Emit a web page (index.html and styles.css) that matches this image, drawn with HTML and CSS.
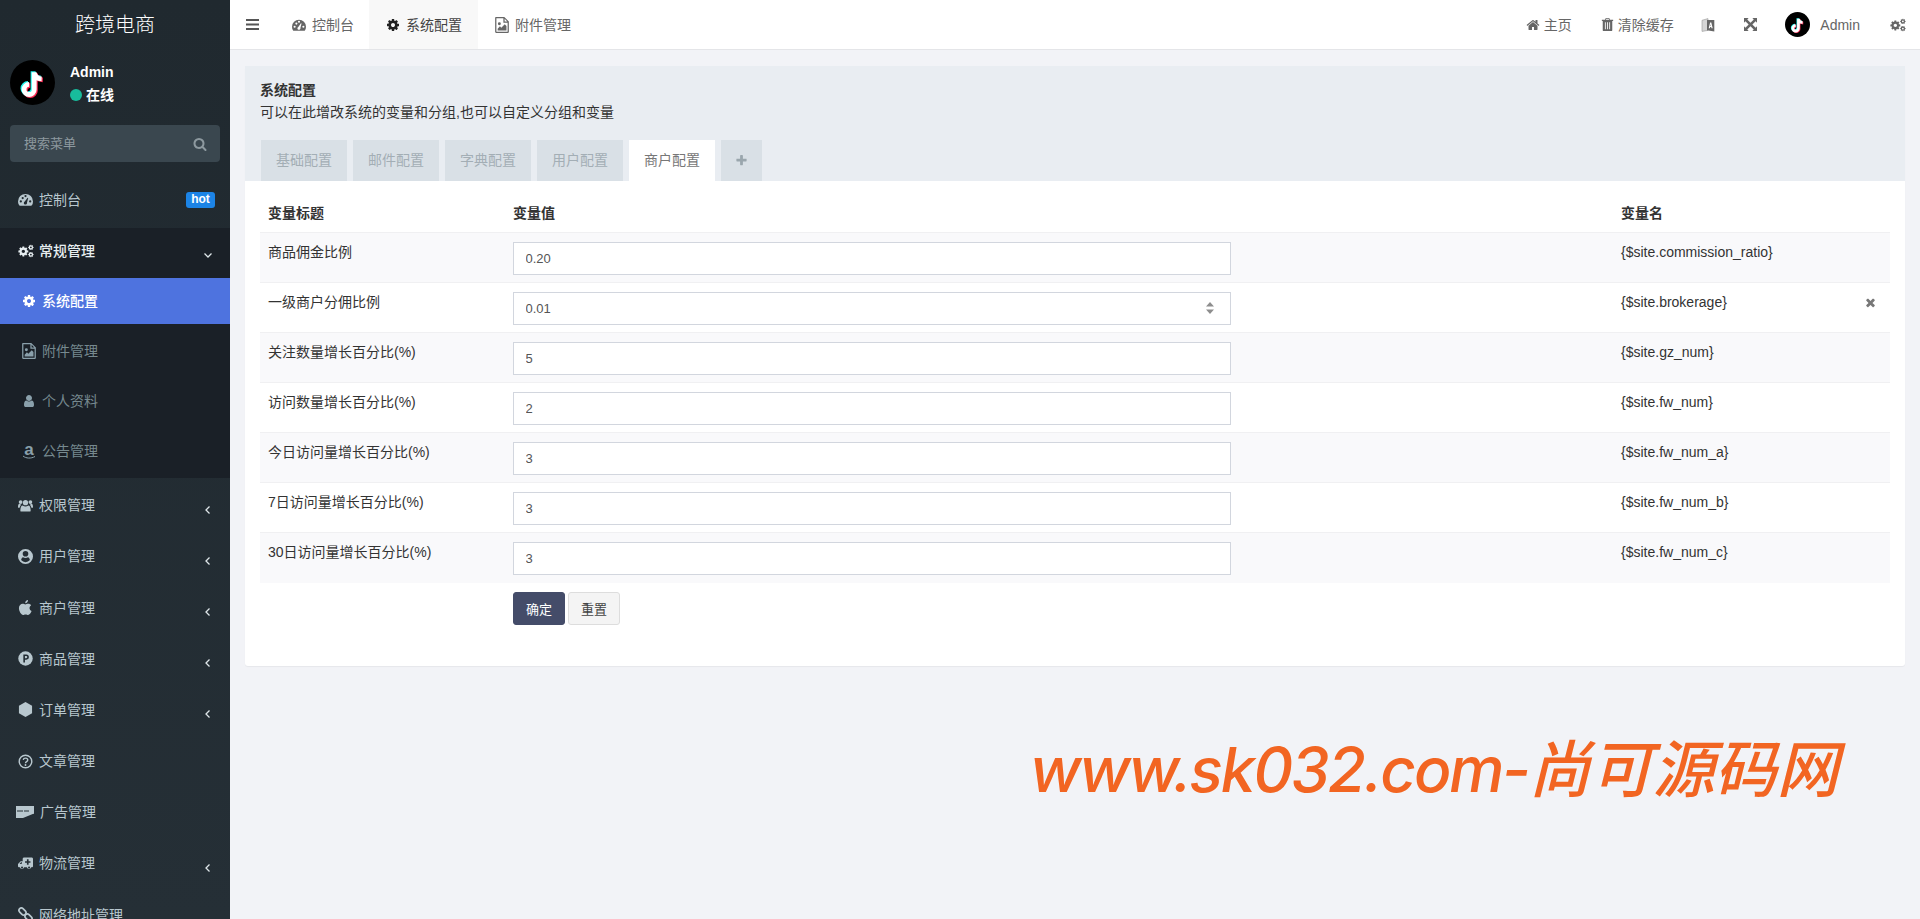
FILE: index.html
```html
<!DOCTYPE html>
<html lang="zh-CN">
<head>
<meta charset="utf-8">
<title>系统配置</title>
<link rel="stylesheet" href="styles.css">
</head>
<body>
<svg class="defs" width="0" height="0" aria-hidden="true">
  <defs>
    <symbol id="i-cog" viewBox="0 0 1792 1792"><path d="M1152 896q0-106-75-181t-181-75-181 75-75 181 75 181 181 75 181-75 75-181zm512-109v222q0 12-8 23t-20 13l-185 28q-19 54-39 91 35 50 107 138 10 12 10 25t-9 23q-27 37-99 108t-94 71q-12 0-26-9l-138-108q-44 23-91 38-16 136-29 186-7 28-36 28h-222q-14 0-24.500-8.500t-11.500-21.500l-28-184q-49-16-90-37l-141 107q-10 9-25 9-14 0-25-11-126-114-165-168-7-10-7-23 0-12 8-23 15-21 51-66.500t54-70.500q-27-50-41-99l-183-27q-13-2-21-12.500t-8-23.500v-222q0-12 8-23t19-13l186-28q14-46 39-92-40-57-107-138-10-12-10-24 0-10 9-23 26-36 98.500-107.500t94.500-71.500q13 0 26 10l138 107q44-23 91-38 16-136 29-186 7-28 36-28h222q14 0 24.500 8.500t11.500 21.500l28 184q49 16 90 37l142-107q9-9 24-9 13 0 25 10 129 119 165 170 7 8 7 22 0 12-8 23-15 21-51 66.500t-54 70.500q26 50 41 98l183 28q13 2 21 12.500t8 23.500z"/></symbol>
    <symbol id="i-cogs" viewBox="0 1 18 15"><use href="#i-cog" x="-.5" y="2.500" width="13" height="13"/><use href="#i-cog" x="11" y="1" width="7" height="7"/><use href="#i-cog" x="11" y="9" width="7" height="7"/></symbol>
    <symbol id="i-gauge" viewBox="0 0 16 14"><path fill-rule="evenodd" d="M8 1a8 8 0 0 0-8 8c0 1.600.4 3 1.200 4.200.2.300.5.500.9.500h11.800c.4 0 .7-.2.900-.5A8 8 0 0 0 16 9a8 8 0 0 0-8-8zM3 10.200a1.200 1.200 0 1 1 0-2.400 1.200 1.200 0 0 1 0 2.400zm2-3.600a1.200 1.200 0 1 1 0-2.400 1.200 1.200 0 0 1 0 2.400zM8 4.500a1.200 1.200 0 1 1 0-2.400 1.200 1.200 0 0 1 0 2.400zM9.200 11.800a1.700 1.700 0 0 1-3-1.200c0-.6.500-1.100 1-1.400l3-4.200.7.300-1.300 5c.2.500.1 1.100-.4 1.500zM13 10.200a1.200 1.200 0 1 1 0-2.400 1.200 1.200 0 0 1 0 2.400z"/></symbol>
    <symbol id="i-file" viewBox="0 0 12 14"><path fill-rule="evenodd" d="M.8 0h7.200l4 4v9.200c0 .4-.4.800-.8.800H.8c-.4 0-.8-.4-.8-.8V.8C0 .4.400 0 .8 0zm.3 1.100v11.800h9.800V5H7.200V1.100zM8.300 1.500V3.900h2.300zM2.200 11.800v-1.600l2-2 1.200 1.200 3-3 1.500 1.500v3.900zM3.700 7.200a1.300 1.300 0 1 1 0-2.600 1.300 1.300 0 0 1 0 2.600z"/></symbol>
    <symbol id="i-user" viewBox="0 0 1792 1792"><path d="M1536 1399q0 109-62.500 187t-150.500 78h-854q-88 0-150.500-78t-62.500-187q0-85 8.500-160.500t31.500-152 58.500-131 94-89 134.500-34.500q131 128 313 128t313-128q76 0 134.500 34.500t94 89 58.500 131 31.500 152 8.500 160.500zm-256-887q0 159-112.500 271.500t-271.500 112.500-271.500-112.500-112.500-271.500 112.500-271.500 271.500-112.500 271.500 112.500 112.500 271.500z"/></symbol>
    <symbol id="i-users" viewBox="0 0 16 13"><circle cx="8" cy="3.500" r="2.800"/><circle cx="2.800" cy="2.800" r="2"/><circle cx="13.200" cy="2.800" r="2"/><path d="M3.500 13c-.6 0-1-.4-1-1 0-3 .8-5.500 2.500-5.500 1 .7 2 1 3 1s2-.3 3-1c1.700 0 2.500 2.500 2.500 5.500 0 .6-.4 1-1 1z"/><path d="M0 8c0-1.800.5-3.300 1.500-3.300.6.400 1.200.6 1.900.6-.3.900-1.300 1.500-1.700 3.700H.6C.2 9 0 8.500 0 8zM16 8c0-1.800-.5-3.300-1.500-3.300-.6.400-1.200.6-1.900.6.300.9 1.300 1.500 1.700 3.700h1.100c.4 0 .6-.5.600-1z"/></symbol>
    <symbol id="i-ucircle" viewBox="0 0 16 16"><path fill-rule="evenodd" d="M8 0a8 8 0 1 1 0 16A8 8 0 0 1 8 0zm0 2a3 3 0 1 0 0 6 3 3 0 0 0 0-6zm-4.700 9.700A6 6 0 0 0 8 14a6 6 0 0 0 4.700-2.300C12.400 10 11.500 9 10.600 8.800 9.900 9.300 9 9.600 8 9.600s-1.900-.3-2.600-.8C4.500 9 3.600 10 3.300 11.700z"/></symbol>
    <symbol id="i-apple" viewBox="0 0 14 16"><path d="M9.700 0c.1 1.800-1.300 3.400-3 3.500C6.500 1.700 8 .2 9.700 0zM4 4c1.100 0 2 .7 2.900.7.800 0 1.800-.8 3.100-.7 1.200 0 2.300.6 3 1.600-2.500 1.600-2.100 5 .5 6.200-.8 2-2.300 4.200-3.700 4.200-.9 0-1.400-.6-2.700-.6s-1.800.6-2.700.6C2.400 16 0 11.900 0 8.600 0 5.700 2 4 4 4z"/></symbol>
    <symbol id="i-ph" viewBox="0 0 16 16"><circle cx="8" cy="8" r="7.700"/><path fill="#222c33" fill-rule="evenodd" d="M5.700 3.800h3.200a2.700 2.700 0 0 1 0 5.400H7.400v3H5.700zm1.700 1.600v2.200h1.400a1.100 1.100 0 0 0 0-2.200z"/></symbol>
    <symbol id="i-cube" viewBox="0 0 14 16"><path d="M7 0l7 4v8l-7 4-7-4V4z"/></symbol>
    <symbol id="i-help" viewBox="0 0 16 16"><circle class="ring" cx="8" cy="8" r="6.700"/><path class="hook" d="M5.600 6.300C5.800 5 6.800 4.400 8 4.400c1.400 0 2.400.8 2.400 2 0 1.800-2.400 1.700-2.400 3.400"/><circle cx="8" cy="11.700" r="1"/></symbol>
    <symbol id="i-card" viewBox="0 0 18 12"><path fill-rule="evenodd" d="M0 0h18v12H0zM1 4.500v1h6v-1zM8 4.500v1h5v-1zM7 12l11-4.500V12z"/></symbol>
    <symbol id="i-amb" viewBox="0 0 16 13"><path fill-rule="evenodd" d="M5 1.500C5 .7 5.700 0 6.500 0h8C15.300 0 16 .7 16 1.500V9.500c0 .6-.4 1-1 1h-1a2.300 2.300 0 0 1-4.500 0h-3A2.300 2.300 0 0 1 2 10.500H1c-.6 0-1-.4-1-1V7l2.800-3H5zM1.700 7H4V5H3.500zM9.500 2v2H7.500v1.800h2v2h1.800v-2h2V4h-2V2zM4.300 11.800a1.100 1.100 0 1 0 0-2.200 1.100 1.100 0 0 0 0 2.200zm7.500 0a1.100 1.100 0 1 0 0-2.200 1.100 1.100 0 0 0 0 2.200z"/></symbol>
    <symbol id="i-link" viewBox="0 0 16 16"><g class="chain"><rect x="-4.200" y="-2.500" width="8.400" height="5" rx="2.500" transform="translate(4.800 4.800) rotate(45)"/><rect x="-4.200" y="-2.500" width="8.400" height="5" rx="2.500" transform="translate(11.200 11.200) rotate(45)"/></g></symbol>
    <symbol id="i-home" viewBox="0 0 1792 1792"><path d="M1472 992v480q0 26-19 45t-45 19h-384v-384h-256v384h-384q-26 0-45-19t-19-45v-480q0-1 .5-3t.5-3l575-474 575 474q1 2 1 6zm223-69l-62 74q-8 9-21 11h-3q-13 0-21-7l-692-577-692 577q-12 8-24 7-13-2-21-11l-62-74q-8-10-7-23.500t11-21.500l719-599q32-26 76-26t76 26l244 204v-195q0-14 9-23t23-9h192q14 0 23 9t9 23v408l219 182q10 8 11 21.500t-7 23.500z"/></symbol>
    <symbol id="i-trash" viewBox="0 0 13 15"><path fill-rule="evenodd" d="M4.500 0h4l.8 2H13v1.400h-1V14c0 .6-.4 1-1 1H2c-.6 0-1-.4-1-1V3.400H0V2h3.700zM5 1l-.3 1h3.600L8 1zM3.500 5v8h1V5zM6 5v8h1V5zM8.500 5v8h1V5z"/></symbol>
    <symbol id="i-lang" viewBox="0 0 13 14"><path fill="#d5d5d5" stroke="#999" stroke-width=".6" d="M.5 2.300L6.500.6v11.800L.5 13.400z"/><path d="M5.500 2h7.300v11.500L5.500 12.300z"/><path fill="#fff" fill-rule="evenodd" d="M7.200 10.200L8.600 4.500h1.200l1.400 5.700h-1.200l-.3-1.200H8.700l-.3 1.200zM8.900 8h.6l-.3-1.700z"/></symbol>
    <symbol id="i-expand" viewBox="0 0 14 14"><path d="M0 0h5L3.500 1.500 7 5l3.500-3.500L9 0h5v5l-1.500-1.500L9 7l3.500 3.500L14 9v5H9l1.500-1.500L7 9l-3.500 3.500L5 14H0V9l1.500 1.500L5 7 1.500 3.500 0 5z"/></symbol>
    <symbol id="i-times" viewBox="0 0 1792 1792"><path d="M1490 1322q0 40-28 68l-136 136q-28 28-68 28t-68-28l-294-294-294 294q-28 28-68 28t-68-28l-136-136q-28-28-28-68t28-68l294-294-294-294q-28-28-28-68t28-68l136-136q28-28 68-28t68 28l294 294 294-294q28-28 68-28t68 28l136 136q28 28 28 68t-28 68l-294 294 294 294q28 28 28 68z"/></symbol>
    <symbol id="i-plus" viewBox="0 0 1792 1792"><path d="M1600 736v192q0 40-28 68t-68 28h-416v416q0 40-28 68t-68 28h-192q-40 0-68-28t-28-68v-416h-416q-40 0-68-28t-28-68v-192q0-40 28-68t68-28h416v-416q0-40 28-68t68-28h192q40 0 68 28t28 68v416h416q40 0 68 28t28 68z"/></symbol>
    <symbol id="i-search" viewBox="0 0 1792 1792"><path d="M1216 832q0-185-131.500-316.500t-316.500-131.500-316.500 131.500-131.500 316.500 131.500 316.500 316.500 131.500 316.500-131.500 131.500-316.500zm512 832q0 52-38 90t-90 38q-54 0-90-38l-343-342q-179 124-399 124-143 0-273.500-55.500t-225-150-150-225-55.500-273.500 55.500-273.500 150-225 225-150 273.500-55.500 273.500 55.500 225 150 150 225 55.500 273.500q0 220-124 399l343 343q37 37 37 90z"/></symbol>
    <symbol id="i-tiktok" viewBox="0 0 24 24"><circle cx="12" cy="12" r="12" fill="#000"/><g fill="none" stroke-width="2.600"><path stroke="#25f4ee" d="M12.300 6v9.200a2.700 2.700 0 1 1-2.700-2.700M12.300 6.200c.3 2 1.800 3.300 4 3.400"/><path stroke="#fe2c55" d="M13.500 7v9.200a2.700 2.700 0 1 1-2.700-2.700M13.500 7.200c.3 2 1.800 3.300 4 3.400"/><path stroke="#fff" d="M12.900 6.500v9.200a2.700 2.700 0 1 1-2.700-2.700M12.900 6.700c.3 2 1.800 3.300 4 3.400"/></g></symbol>
  </defs>
</svg>

<aside class="sidebar">
  <div class="logo">跨境电商</div>
  <div class="user-panel">
    <svg class="avatar-lg"><use href="#i-tiktok"/></svg>
    <div class="user-info">
      <div class="user-name">Admin</div>
      <div class="user-status"><span class="dot"></span>在线</div>
    </div>
  </div>
  <div class="side-search">
    <span>搜索菜单</span>
    <svg class="ic ic-14"><use href="#i-search"/></svg>
  </div>
  <nav class="menu">
    <a class="item"><svg class="ic"><use href="#i-gauge"/></svg><span>控制台</span><b class="hot">hot</b></a>
    <a class="item open"><svg class="ic ic-cogs"><use href="#i-cogs"/></svg><span>常规管理</span><svg class="chev" viewBox="0 0 10 10"><path d="M1.500 3.500L5 7l3.500-3.500"/></svg></a>
    <div class="submenu">
      <a class="sub active"><svg class="ic ic-14"><use href="#i-cog"/></svg><span>系统配置</span></a>
      <a class="sub"><svg class="ic ic-file"><use href="#i-file"/></svg><span>附件管理</span></a>
      <a class="sub"><svg class="ic ic-14"><use href="#i-user"/></svg><span>个人资料</span></a>
      <a class="sub"><svg class="ic ic-14 amazon" viewBox="0 0 14 16"><text x="7" y="11.500" text-anchor="middle">a</text><path class="smile" d="M1 13c3 2.500 8 2.800 12 .5"/></svg><span>公告管理</span></a>
    </div>
    <a class="item"><svg class="ic"><use href="#i-users"/></svg><span>权限管理</span><svg class="chev" viewBox="0 0 10 10"><path d="M6.500 1.500L3 5l3.500 3.500"/></svg></a>
    <a class="item"><svg class="ic"><use href="#i-ucircle"/></svg><span>用户管理</span><svg class="chev" viewBox="0 0 10 10"><path d="M6.500 1.500L3 5l3.500 3.500"/></svg></a>
    <a class="item"><svg class="ic"><use href="#i-apple"/></svg><span>商户管理</span><svg class="chev" viewBox="0 0 10 10"><path d="M6.500 1.500L3 5l3.500 3.500"/></svg></a>
    <a class="item"><svg class="ic"><use href="#i-ph"/></svg><span>商品管理</span><svg class="chev" viewBox="0 0 10 10"><path d="M6.500 1.500L3 5l3.500 3.500"/></svg></a>
    <a class="item"><svg class="ic"><use href="#i-cube"/></svg><span>订单管理</span><svg class="chev" viewBox="0 0 10 10"><path d="M6.500 1.500L3 5l3.500 3.500"/></svg></a>
    <a class="item"><svg class="ic"><use href="#i-help"/></svg><span>文章管理</span></a>
    <a class="item"><svg class="ic ic-card"><use href="#i-card"/></svg><span>广告管理</span></a>
    <a class="item"><svg class="ic"><use href="#i-amb"/></svg><span>物流管理</span><svg class="chev" viewBox="0 0 10 10"><path d="M6.500 1.500L3 5l3.500 3.500"/></svg></a>
    <a class="item"><svg class="ic"><use href="#i-link"/></svg><span>网络地址管理</span></a>
  </nav>
</aside>

<div class="main">
  <header class="topbar">
    <button class="burger"><svg viewBox="0 0 13 11"><path d="M0 0h13v2H0zM0 4.500h13v2H0zM0 9h13v2H0z"/></svg></button>
    <div class="tabs-top">
      <a class="ttab first"><svg class="ic ic-14"><use href="#i-gauge"/></svg>控制台</a>
      <a class="ttab current"><svg class="ic ic-14"><use href="#i-cog"/></svg>系统配置</a>
      <a class="ttab"><svg class="ic ic-file"><use href="#i-file"/></svg>附件管理</a>
    </div>
    <div class="top-right">
      <a class="tr-link tr-home"><svg class="ic ic-14"><use href="#i-home"/></svg>主页</a>
      <a class="tr-link tr-clear"><svg class="ic ic-13"><use href="#i-trash"/></svg>清除缓存</a>
      <a class="tr-icon tr-lang"><svg class="ic ic-14"><use href="#i-lang"/></svg></a>
      <a class="tr-icon tr-expand"><svg class="ic ic-13"><use href="#i-expand"/></svg></a>
      <a class="tr-admin"><svg class="avatar-sm"><use href="#i-tiktok"/></svg>Admin</a>
      <a class="tr-icon tr-cogs"><svg class="ic ic-cogs"><use href="#i-cogs"/></svg></a>
    </div>
  </header>

  <main class="content">
    <section class="panel">
      <div class="panel-head">
        <div class="panel-title">系统配置</div>
        <div class="panel-desc">可以在此增改系统的变量和分组,也可以自定义分组和变量</div>
        <div class="ptabs">
          <a class="ptab">基础配置</a>
          <a class="ptab">邮件配置</a>
          <a class="ptab">字典配置</a>
          <a class="ptab">用户配置</a>
          <a class="ptab on">商户配置</a>
          <a class="ptab add"><svg class="ic ic-13"><use href="#i-plus"/></svg></a>
        </div>
      </div>
      <div class="panel-body">
        <table class="cfg">
          <colgroup><col class="c1"><col class="c2"><col class="c3"></colgroup>
          <thead>
            <tr><th>变量标题</th><th>变量值</th><th>变量名</th></tr>
          </thead>
          <tbody>
            <tr><td>商品佣金比例</td><td><input class="field" value="0.20"></td><td>{$site.commission_ratio}</td></tr>
            <tr><td>一级商户分佣比例</td><td><div class="spin"><input class="field" value="0.01"><svg class="spin-arrows" viewBox="0 0 8 12"><path d="M4 0l4 4.500H0zM4 12L0 7.500h8z"/></svg></div></td><td class="with-x">{$site.brokerage}<svg class="x"><use href="#i-times"/></svg></td></tr>
            <tr><td>关注数量增长百分比(%)</td><td><input class="field" value="5"></td><td>{$site.gz_num}</td></tr>
            <tr><td>访问数量增长百分比(%)</td><td><input class="field" value="2"></td><td>{$site.fw_num}</td></tr>
            <tr><td>今日访问量增长百分比(%)</td><td><input class="field" value="3"></td><td>{$site.fw_num_a}</td></tr>
            <tr><td>7日访问量增长百分比(%)</td><td><input class="field" value="3"></td><td>{$site.fw_num_b}</td></tr>
            <tr><td>30日访问量增长百分比(%)</td><td><input class="field" value="3"></td><td>{$site.fw_num_c}</td></tr>
          </tbody>
          <tfoot>
            <tr><td></td><td><button class="btn primary">确定</button><button class="btn plain">重置</button></td><td></td></tr>
          </tfoot>
        </table>
      </div>
    </section>
  </main>
  <div class="watermark"><span class="wm-latin">www.sk032.com-</span>尚可源码网</div>
</div>
</body>
</html>
```

FILE: styles.css
```css
* { box-sizing: border-box; }
html, body { height: 100%; }
body {
  margin: 0;
  display: flex;
  overflow: hidden;
  font: 14px/20px "Liberation Sans", "Noto Sans CJK SC", sans-serif;
  color: #333;
  background: #f2f3f7;
}
a { color: inherit; text-decoration: none; }
.defs { position: absolute; }
.ic { width: 16px; height: 16px; fill: currentColor; flex: none; }
.ic-13 { width: 13px; height: 13px; }
.ic-14 { width: 14px; height: 14px; }
.ic-file { width: 14px; height: 16px; }
.ic-cogs { width: 16px; height: 14px; }
.ring, .hook { fill: none; stroke: currentColor; stroke-width: 1.500; }
.chain rect { fill: none; stroke: currentColor; stroke-width: 1.800; }

/* sidebar */
.sidebar {
  width: 230px;
  flex: none;
  height: 100vh;
  overflow: hidden;
  background: linear-gradient(#20292f, #252f36);
  color: #b8c7ce;
}
.logo {
  height: 50px;
  text-align: center;
  font-size: 20px;
  line-height: 50px;
  color: #fff;
  font-weight: 300;
}
.user-panel { display: flex; padding: 10px; height: 65px; }
.avatar-lg { width: 45px; height: 45px; flex: none; }
.avatar-sm { width: 25px; height: 25px; flex: none; }
.user-info { margin-left: 15px; color: #fff; font-weight: 700; font-size: 14px; }
.user-name { line-height: 20px; margin-top: 2px; }
.user-status { display: flex; align-items: center; line-height: 20px; margin-top: 3px; }
.dot { width: 12px; height: 12px; border-radius: 50%; background: #18bc9c; margin-right: 4px; }
.side-search {
  margin: 10px 10px 12px;
  height: 37px;
  padding: 0 13px 0 14px;
  display: flex;
  align-items: center;
  justify-content: space-between;
  background: #3a474f;
  border-radius: 4px;
  color: #8d999f;
  font-size: 13px;
}
.item {
  display: flex;
  align-items: center;
  height: 51.200px;
  padding: 0 15px 0 18px;
  gap: 6px;
}
.item > .ic { width: 15px; height: 15px; }
.item > .ic-cogs { width: 16px; height: 14px; }
.item > .ic-card { width: 18px; height: 12px; margin-left: -2px; margin-right: 0; }
.item.open { height: 50px; padding-bottom: 4px; margin-top: 2.400px; gap: 5px; background: #1a2027; color: #e6edf0; font-weight: 500; }
.hot {
  margin-left: auto;
  width: 29px;
  height: 16px;
  border-radius: 3px;
  background: #1c84e6;
  color: #fff;
  font-size: 12px;
  line-height: 15px;
  text-align: center;
}
.chev {
  margin-left: auto;
  margin-top: 9px;
  margin-right: 2px;
  width: 10px;
  height: 10px;
  fill: none;
  stroke: #dfe7ea;
  stroke-width: 1.300;
}
.submenu { background: #1a2027; padding-bottom: 2px; margin-bottom: 2px; }
.sub {
  display: flex;
  align-items: center;
  gap: 6px;
  height: 50px;
  padding-left: 22px;
  color: #76898f;
}
.sub .ic { color: #8aa0ab; }
.sub.active { height: 46px; margin-bottom: 2px; background: #4e73df; color: #fff; font-weight: 500; }
.sub.active .ic { color: #fff; }
.amazon { height: 16px; overflow: visible; }
.amazon text { font: 700 17px "Liberation Sans", sans-serif; }
.smile { fill: none; stroke: currentColor; stroke-width: 1; }

/* top bar */
.main { flex: 1; min-width: 0; display: flex; flex-direction: column; position: relative; }
.topbar {
  flex: none;
  height: 50px;
  display: flex;
  align-items: center;
  background: #fff;
  border-bottom: 1px solid #e4e5e8;
  color: #666;
}
.burger {
  width: 47px;
  height: 49px;
  padding: 0 0 0 16px;
  border: 0;
  background: none;
  display: flex;
  align-items: center;
  color: #555;
}
.burger svg { width: 13px; height: 11px; fill: currentColor; }
.tabs-top { display: flex; height: 49px; }
.ttab {
  display: flex;
  align-items: center;
  gap: 6px;
  padding: 0 16px 0 17px;
}
.ttab.first { padding-left: 15px; padding-right: 15px; }
.ttab.current { background: #f8f8f8; color: #444; }
.ttab.current .ic { color: #222; }
.top-right { margin-left: auto; display: flex; align-items: center; height: 49px; }
.tr-link { display: flex; align-items: center; gap: 4px; }
.tr-home { margin-right: 29px; }
.tr-clear { margin-right: 27.500px; }
.tr-icon { display: flex; align-items: center; }
.tr-lang { margin-right: 29px; }
.tr-expand { margin-right: 28px; }
.tr-admin { display: flex; align-items: center; gap: 10px; margin-right: 30px; }
.tr-cogs { margin-right: 14px; }

/* content */
.content { flex: 1; padding: 16px 15px 15px; }
.panel { background: #fff; box-shadow: 0 1px 1px rgba(0,0,0,.05); border-radius: 3px; }
.panel-head { background: #e9edf2; padding: 14px 15px 0; }
.panel-title { font-weight: 700; line-height: 20px; color: #333; font-size: 14px; }
.panel-desc { line-height: 20px; margin-top: 2px; }
.ptabs { display: flex; gap: 6px; margin-top: 18px; padding-left: 1px; }
.ptab {
  width: 86px;
  height: 41px;
  line-height: 41px;
  text-align: center;
  background: #d9e0e6;
  color: #a3aeb5;
}
.ptab.on { background: #fff; color: #777; }
.ptab.add { width: 41px; display: flex; align-items: center; justify-content: center; color: #9aa6ad; }
.panel-body { padding: 15px 15px 32px; }
.cfg { width: 100%; table-layout: fixed; border-collapse: collapse; }
.c1 { width: 245px; }
.c2 { width: 1108px; }
.cfg th { text-align: left; padding: 7px 8px 9px; font-weight: 700; height: 36px; color: #333; }
.cfg tbody td { vertical-align: top; padding: 9px 8px 7px; height: 50px; border-top: 1px solid #f0f0f2; line-height: 20px; }
.cfg tbody tr:nth-child(odd) { background: #f9f9fb; }
.cfg tfoot td { padding: 9px 8px; }
.field {
  display: block;
  width: 718px;
  height: 33px;
  padding: 0 11.500px;
  border: 1px solid #d2d6de;
  background: #fff;
  color: #555;
  font: 13px "Liberation Sans", sans-serif;
}
.spin { position: relative; width: 718px; }
.spin-arrows { position: absolute; right: 17px; top: 10px; width: 8px; height: 12px; fill: #8e8e8e; }
.with-x { position: relative; }
.x { position: absolute; right: 13px; top: 13px; width: 13px; height: 13px; fill: #777; }
.btn {
  width: 52px;
  height: 33px;
  border-radius: 3px;
  font: 13px "Liberation Sans", "Noto Sans CJK SC", sans-serif;
  padding: 0;
}
.primary { background: #444c69; border: 1px solid #444c69; color: #fff; margin-right: 3px; }
.plain { background: #f4f4f4; border: 1px solid #ddd; color: #444; }

.watermark {
  position: absolute;
  left: 800px;
  top: 730px;
  color: #f26522;
  font: italic 500 62px/80px Inter, "Noto Sans CJK SC", sans-serif;
  white-space: nowrap;
}
.wm-latin { letter-spacing: -2.200px; }
```
